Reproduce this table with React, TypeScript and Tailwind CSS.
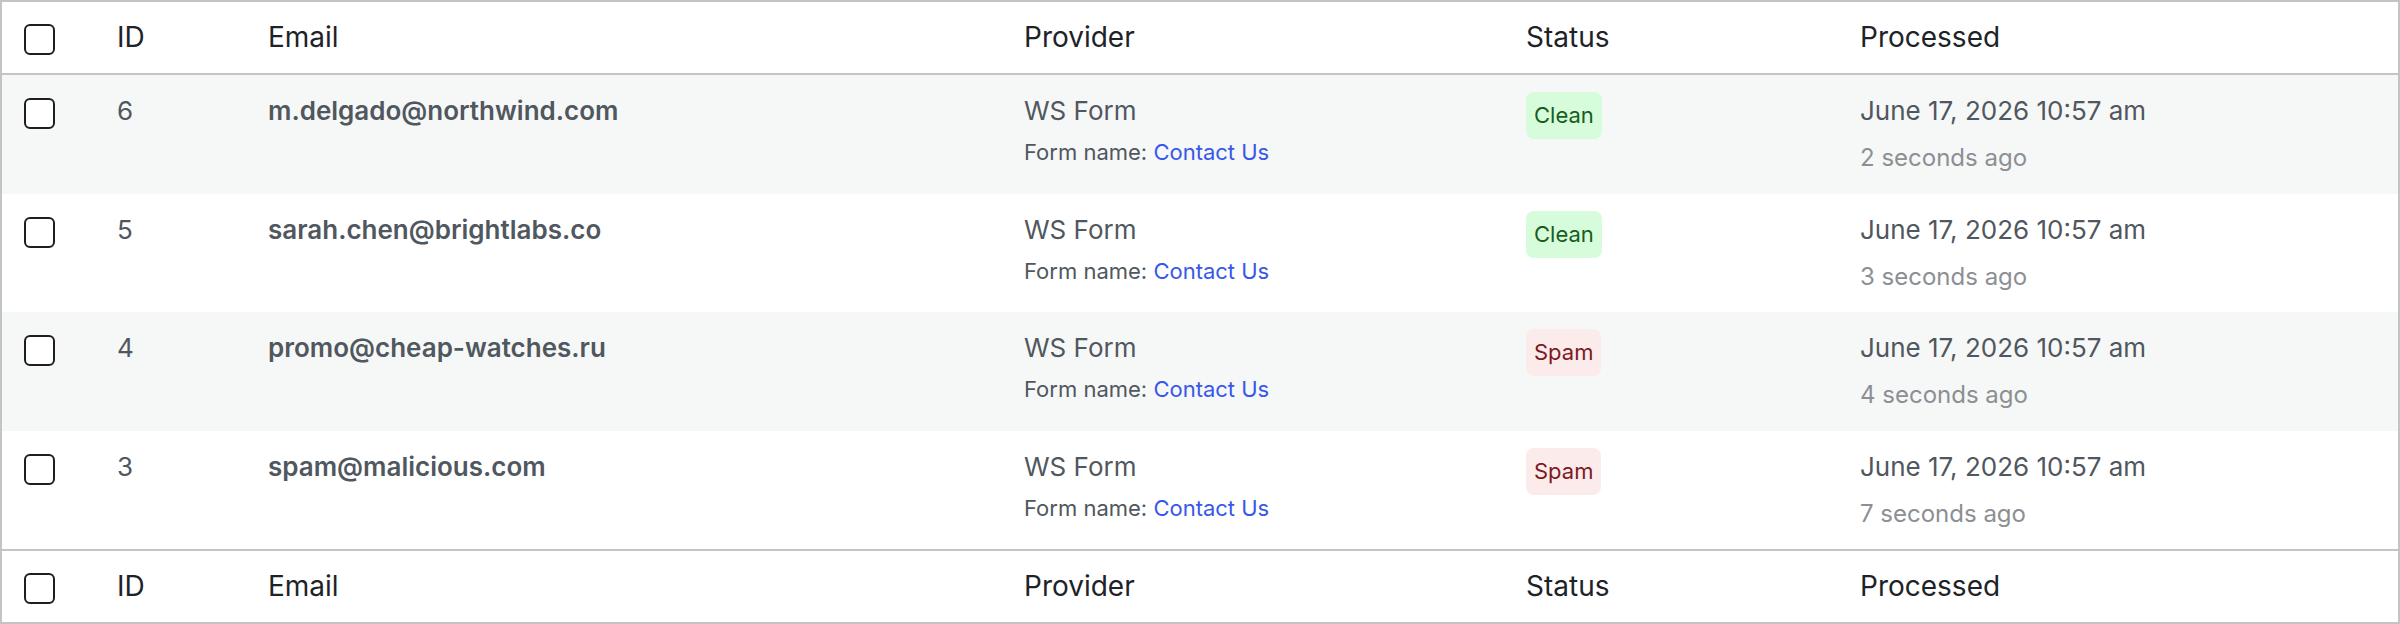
import React from "react";

interface Submission {
  id: number;
  email: string;
  provider: string;
  formName: string;
  status: "Clean" | "Spam";
  processed: string;
  ago: string;
}

const rows: Submission[] = [
  { id: 6, email: "m.delgado@northwind.com", provider: "WS Form", formName: "Contact Us", status: "Clean", processed: "June 17, 2026 10:57 am", ago: "2 seconds ago" },
  { id: 5, email: "sarah.chen@brightlabs.co", provider: "WS Form", formName: "Contact Us", status: "Clean", processed: "June 17, 2026 10:57 am", ago: "3 seconds ago" },
  { id: 4, email: "promo@cheap-watches.ru", provider: "WS Form", formName: "Contact Us", status: "Spam", processed: "June 17, 2026 10:57 am", ago: "4 seconds ago" },
  { id: 3, email: "spam@malicious.com", provider: "WS Form", formName: "Contact Us", status: "Spam", processed: "June 17, 2026 10:57 am", ago: "7 seconds ago" },
];

const cols = "grid grid-cols-[95px_151px_756px_502px_334px_1fr]";

function Checkbox() {
  return <span className="block w-[31px] h-[31px] rounded-[6px] border-2 border-[#1e1e1e] bg-white" />;
}

function HeaderRow({ top }: { top?: boolean }) {
  return (
    <div className={`${cols} bg-white text-[28px] leading-[39px] text-[#1d2327] ${top ? "border-b-2" : "border-t-2"} border-[#c3c4c7]`}>
      <div className="pl-[22px] pt-[22px]">
        <Checkbox />
      </div>
      <div className="px-[20px] py-[16px]">ID</div>
      <div className="px-[20px] py-[16px]">Email</div>
      <div className="px-[20px] py-[16px]">Provider</div>
      <div className="px-[20px] py-[16px]">Status</div>
      <div className="px-[20px] py-[16px]">Processed</div>
    </div>
  );
}

function StatusBadge({ status }: { status: Submission["status"] }) {
  const clean = status === "Clean";
  return (
    <span
      className={`inline-block h-[47px] px-[8px] rounded-[8px] text-[22px] leading-[47px] ${
        clean ? "bg-[#d7fcdc] text-[#175d1d]" : "bg-[#fcebeb] text-[#7d1a1f]"
      }`}
    >
      {status}
    </span>
  );
}

export default function App() {
  return (
    <div className="w-[2400px] bg-white [font-family:Inter,'Liberation_Sans',sans-serif]">
      <div className="border-2 border-[#c3c4c7]">
        <HeaderRow top />
        {rows.map((row, i) => (
          <div key={row.id} className={`${cols} h-[118.5px] text-[26px] leading-[39px] text-[#50575e] ${i % 2 === 0 ? "bg-[#f6f7f7]" : "bg-white"}`}>
            <div className="pl-[22px] pt-[23px]">
              <Checkbox />
            </div>
            <div className="px-[20px] py-[16px]">{row.id}</div>
            <div className="px-[20px] py-[16px] font-semibold">{row.email}</div>
            <div className="px-[20px] py-[16px]">
              <div>{row.provider}</div>
              <div className="mt-[6px] text-[22px] leading-[32px]">
                Form name: <span className="text-[#3858e9]">{row.formName}</span>
              </div>
            </div>
            <div className="px-[20px] pt-[17px]">
              <StatusBadge status={row.status} />
            </div>
            <div className="px-[20px] py-[16px]">
              <div>{row.processed}</div>
              <div className="mt-[10px] text-[24px] leading-[36px] text-[#8c8f94]">{row.ago}</div>
            </div>
          </div>
        ))}
        <HeaderRow />
      </div>
    </div>
  );
}
